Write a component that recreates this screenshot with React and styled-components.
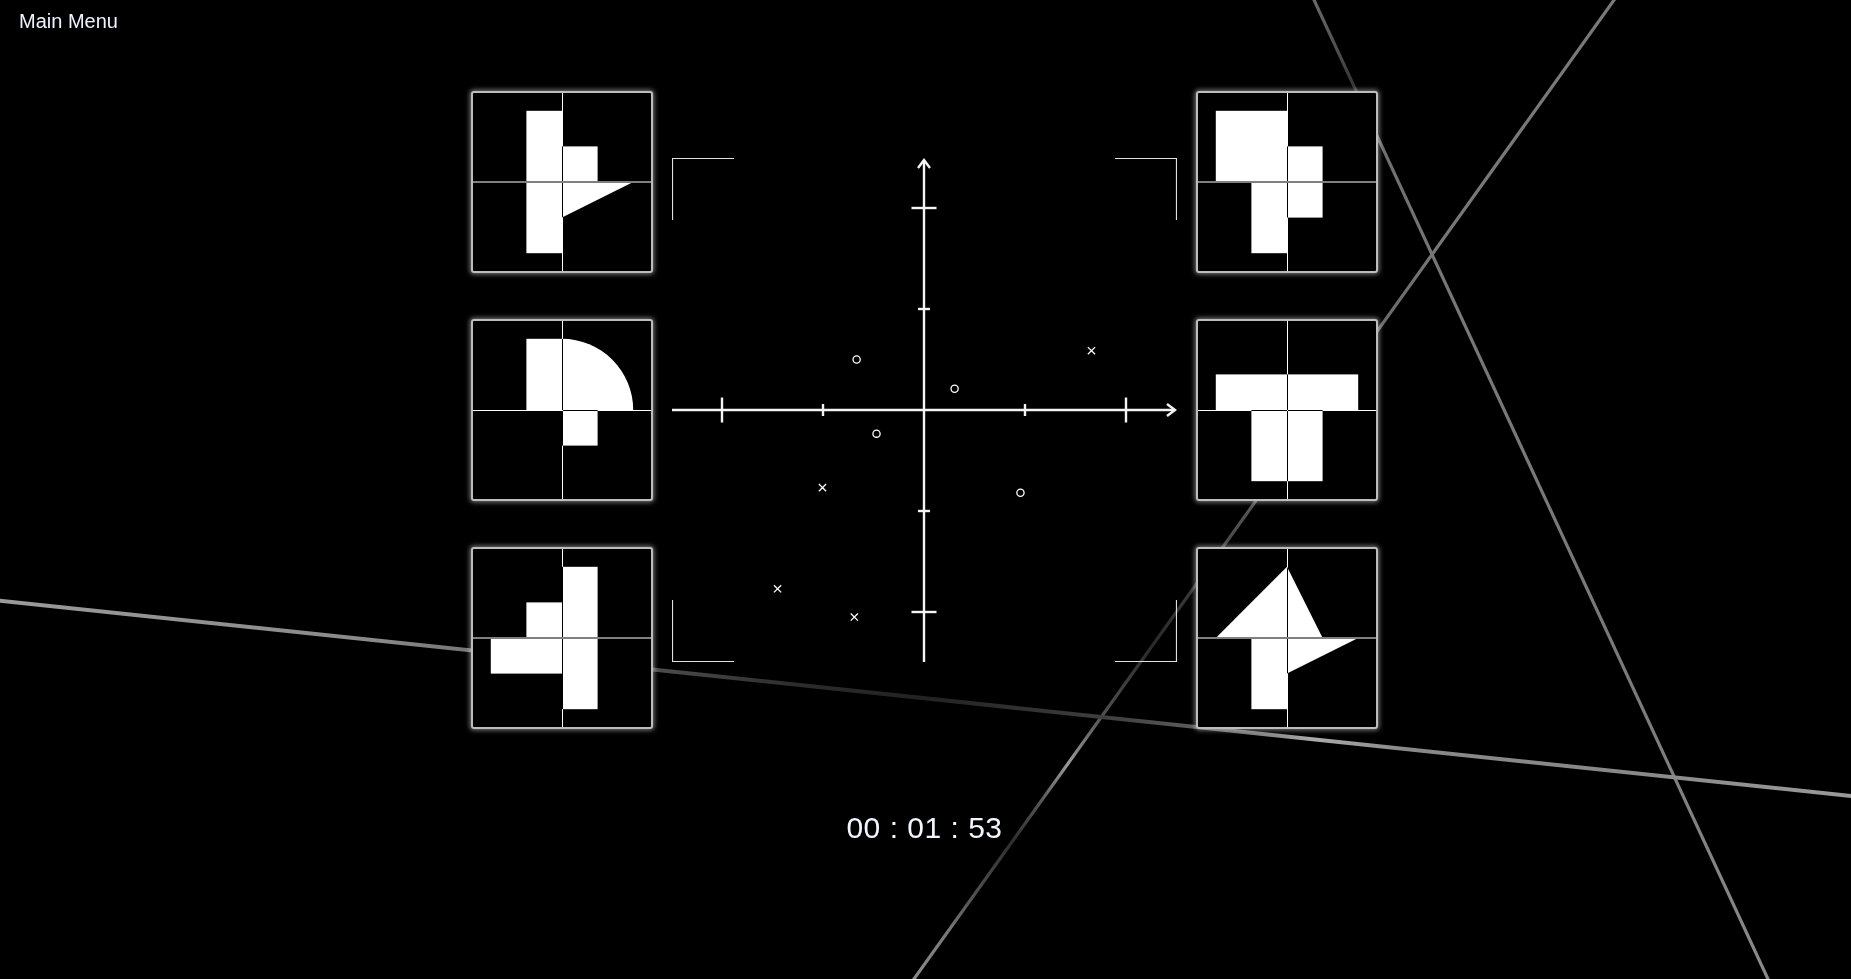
import React from "react";
import styled, { createGlobalStyle } from "styled-components";

const Global = createGlobalStyle`
  html, body { margin: 0; padding: 0; background: #000; }
  body { font-family: "Liberation Sans", Arial, sans-serif; overflow: hidden; }
  #root { min-height: 100vh; }
`;

const Page = styled.div`
  position: relative;
  min-height: 100vh;
  background: #000;
  color: #f0f4ff;
`;

const Backdrop = styled.svg`
  position: fixed;
  inset: 0;
  width: 100%;
  height: 100%;
  z-index: 0;
  pointer-events: none;
`;

const Content = styled.div`
  position: relative;
  z-index: 1;
  display: flex;
  flex-direction: column;
`;

const Header = styled.header`
  padding: 11px 0 0 19px;
  height: 20px;
`;

const MenuLink = styled.a`
  font-size: 20px;
  line-height: 20px;
  color: #eef3ff;
  text-decoration: none;
  cursor: pointer;
`;

const Stage = styled.main`
  display: flex;
  flex-direction: column;
  align-items: center;
  padding-right: 2px;
  margin-top: 60px;
`;

const Row = styled.div`
  display: flex;
  align-items: center;
  gap: 19px;
`;

const Column = styled.div`
  display: flex;
  flex-direction: column;
  gap: 46px;
`;

const Tile = styled.div`
  width: 178px;
  height: 178px;
  border: 2px solid #bdbdbd;
  border-radius: 3px;
  background: #000;
  box-shadow: 0 0 5px 1px rgba(255, 255, 255, 0.5);
  display: flex;
`;

const TileArt = styled.svg`
  width: 178px;
  height: 178px;
  display: block;
`;

const CrossLine = styled.line`
  stroke: #fff;
  stroke-width: 1;
  mix-blend-mode: difference;
`;

const Chart = styled.svg`
  width: 505px;
  height: 504px;
  display: block;
  flex: none;
`;

const Timer = styled.div`
  margin-top: 84px;
  font-size: 30px;
  line-height: 30px;
  letter-spacing: 0.5px;
  color: #f2f6ff;
  font-weight: 400;
`;

const U = 35.6;
const C = 89;

const tiles = {
  left: [
    {
      crisp: false,
      shapes: [
        { t: "rect", x: -1, y: -2, w: 1, h: 4 },
        { t: "rect", x: 0, y: -1, w: 1, h: 1 },
        { t: "poly", p: [[0, 0], [2, 0], [0, 1]] },
      ],
    },
    {
      crisp: true,
      shapes: [
        { t: "rect", x: -1, y: -2, w: 1, h: 2 },
        { t: "quarter", r: 2 },
        { t: "rect", x: 0, y: 0, w: 1, h: 1 },
      ],
    },
    {
      crisp: false,
      shapes: [
        { t: "rect", x: 0, y: -2, w: 1, h: 4 },
        { t: "rect", x: -1, y: -1, w: 1, h: 1 },
        { t: "rect", x: -2, y: 0, w: 2, h: 1 },
      ],
    },
  ],
  right: [
    {
      crisp: false,
      shapes: [
        { t: "rect", x: -2, y: -2, w: 2, h: 2 },
        { t: "rect", x: 0, y: -1, w: 1, h: 1 },
        { t: "rect", x: 0, y: 0, w: 1, h: 1 },
        { t: "rect", x: -1, y: 0, w: 1, h: 2 },
      ],
    },
    {
      crisp: true,
      shapes: [
        { t: "rect", x: -2, y: -1, w: 4, h: 1 },
        { t: "rect", x: -1, y: 0, w: 2, h: 2 },
      ],
    },
    {
      crisp: false,
      shapes: [
        { t: "poly", p: [[-2, 0], [0, -2], [1, 0]] },
        { t: "poly", p: [[0, 0], [2, 0], [0, 1]] },
        { t: "rect", x: -1, y: 0, w: 1, h: 2 },
      ],
    },
  ],
};

const px = (v) => C + v * U;

function Shape({ s }) {
  if (s.t === "rect") {
    return <rect x={px(s.x)} y={px(s.y)} width={s.w * U} height={s.h * U} fill="#fff" />;
  }
  if (s.t === "poly") {
    return <polygon points={s.p.map(([x, y]) => `${px(x)},${px(y)}`).join(" ")} fill="#fff" />;
  }
  const r = s.r * U;
  return <path d={`M${C} ${C} L${C} ${C - r} A${r} ${r} 0 0 1 ${C + r} ${C} Z`} fill="#fff" />;
}

function PieceTile({ tile }) {
  const hy = tile.crisp ? C + 0.5 : C;
  return (
    <Tile>
      <TileArt viewBox="0 0 178 178">
        {tile.shapes.map((s, i) => (
          <Shape key={i} s={s} />
        ))}
        <CrossLine x1={C + 0.5} y1={0} x2={C + 0.5} y2={178} />
        <CrossLine x1={0} y1={hy} x2={178} y2={hy} />
      </TileArt>
    </Tile>
  );
}

const CX = 252;
const CY = 252;
const STEP = 101;

const circles = [
  [-0.667, 0.5],
  [0.303, 0.211],
  [-0.47, -0.234],
  [0.955, -0.82],
];
const crosses = [
  [1.658, 0.587],
  [-1.005, -0.769],
  [-1.45, -1.77],
  [-0.69, -2.05],
];

function ScatterChart() {
  const ticks = [-2, -1, 1, 2];
  const ax = "#f4f4f4";
  const br = "#e0e0e0";
  return (
    <Chart viewBox="0 0 505 504">
      <g stroke={br} strokeWidth="1.2" fill="none">
        <path d="M0.5 62 V0.5 H62" />
        <path d="M443 0.5 H504.5 V62" />
        <path d="M0.5 442 V503.5 H62" />
        <path d="M443 503.5 H504.5 V442" />
      </g>
      <g stroke={ax} strokeWidth="2.4" fill="none">
        <line x1="0" y1={CY} x2="503" y2={CY} />
        <line x1={CX} y1="2" x2={CX} y2="504" />
        <path d="M495 246 L503 252 L495 258" strokeLinejoin="miter" />
        <path d={`M${CX - 6} 10 L${CX} 2 L${CX + 6} 10`} strokeLinejoin="miter" />
        {ticks.map((t) => {
          const len = Math.abs(t) === 2 ? 12.5 : 6;
          return (
            <g key={t}>
              <line x1={CX + t * STEP} y1={CY - len} x2={CX + t * STEP} y2={CY + len} />
              <line x1={CX - len} y1={CY - t * STEP} x2={CX + len} y2={CY - t * STEP} />
            </g>
          );
        })}
      </g>
      <g stroke="#fff" strokeWidth="1.3" fill="none">
        {circles.map(([x, y], i) => (
          <circle key={`c${i}`} cx={CX + x * STEP} cy={CY - y * STEP} r="3.6" />
        ))}
        {crosses.map(([x, y], i) => {
          const X = CX + x * STEP;
          const Y = CY - y * STEP;
          const d = 3.6;
          return (
            <path key={`x${i}`} d={`M${X - d} ${Y - d} L${X + d} ${Y + d} M${X + d} ${Y - d} L${X - d} ${Y + d}`} />
          );
        })}
      </g>
    </Chart>
  );
}

function Beams() {
  return (
    <Backdrop viewBox="0 0 1851 979" preserveAspectRatio="none">
      <defs>
        <linearGradient id="beamA" gradientUnits="userSpaceOnUse" x1="1314" y1="0" x2="1768" y2="979">
          <stop offset="0" stopColor="#6a6a6a" />
          <stop offset="0.06" stopColor="#4a4a4a" />
          <stop offset="0.09" stopColor="#333" />
          <stop offset="0.135" stopColor="#6e6e6e" />
          <stop offset="0.3" stopColor="#777" />
          <stop offset="0.7" stopColor="#7a7a7a" />
          <stop offset="1" stopColor="#8a8a8a" />
        </linearGradient>
        <linearGradient id="beamB" gradientUnits="userSpaceOnUse" x1="1614" y1="0" x2="914" y2="979">
          <stop offset="0" stopColor="#7a7a7a" />
          <stop offset="0.25" stopColor="#777" />
          <stop offset="0.33" stopColor="#6a6a6a" />
          <stop offset="0.52" stopColor="#555" />
          <stop offset="0.6" stopColor="#3a3a3a" />
          <stop offset="0.66" stopColor="#2a2a2a" />
          <stop offset="0.73" stopColor="#505050" />
          <stop offset="0.78" stopColor="#999" />
          <stop offset="0.82" stopColor="#555" />
          <stop offset="0.86" stopColor="#2e2e2e" />
          <stop offset="0.92" stopColor="#555" />
          <stop offset="0.95" stopColor="#777" />
          <stop offset="1" stopColor="#8a8a8a" />
        </linearGradient>
        <linearGradient id="beamC" gradientUnits="userSpaceOnUse" x1="0" y1="600.7" x2="1851" y2="796">
          <stop offset="0" stopColor="#9a9a9a" />
          <stop offset="0.2" stopColor="#8a8a8a" />
          <stop offset="0.25" stopColor="#777" />
          <stop offset="0.36" stopColor="#4a4a4a" />
          <stop offset="0.43" stopColor="#2c2c2c" />
          <stop offset="0.5" stopColor="#222" />
          <stop offset="0.56" stopColor="#333" />
          <stop offset="0.61" stopColor="#444" />
          <stop offset="0.66" stopColor="#666" />
          <stop offset="0.71" stopColor="#aaa" />
          <stop offset="0.76" stopColor="#888" />
          <stop offset="0.88" stopColor="#888" />
          <stop offset="1" stopColor="#9a9a9a" />
        </linearGradient>
      </defs>
      <line x1="1309.4" y1="-10" x2="1772.6" y2="989" stroke="url(#beamA)" strokeWidth="3.2" />
      <line x1="1621.2" y1="-10" x2="906.8" y2="989" stroke="url(#beamB)" strokeWidth="3.2" />
      <line x1="-10" y1="599.6" x2="1861" y2="797.1" stroke="url(#beamC)" strokeWidth="4" />
    </Backdrop>
  );
}

export default function App() {
  return (
    <Page>
      <Global />
      <Beams />
      <Content>
        <Header>
          <MenuLink>Main Menu</MenuLink>
        </Header>
        <Stage>
          <Row>
            <Column>
              {tiles.left.map((t, i) => (
                <PieceTile key={i} tile={t} />
              ))}
            </Column>
            <ScatterChart />
            <Column>
              {tiles.right.map((t, i) => (
                <PieceTile key={i} tile={t} />
              ))}
            </Column>
          </Row>
          <Timer>00 : 01 : 53</Timer>
        </Stage>
      </Content>
    </Page>
  );
}
